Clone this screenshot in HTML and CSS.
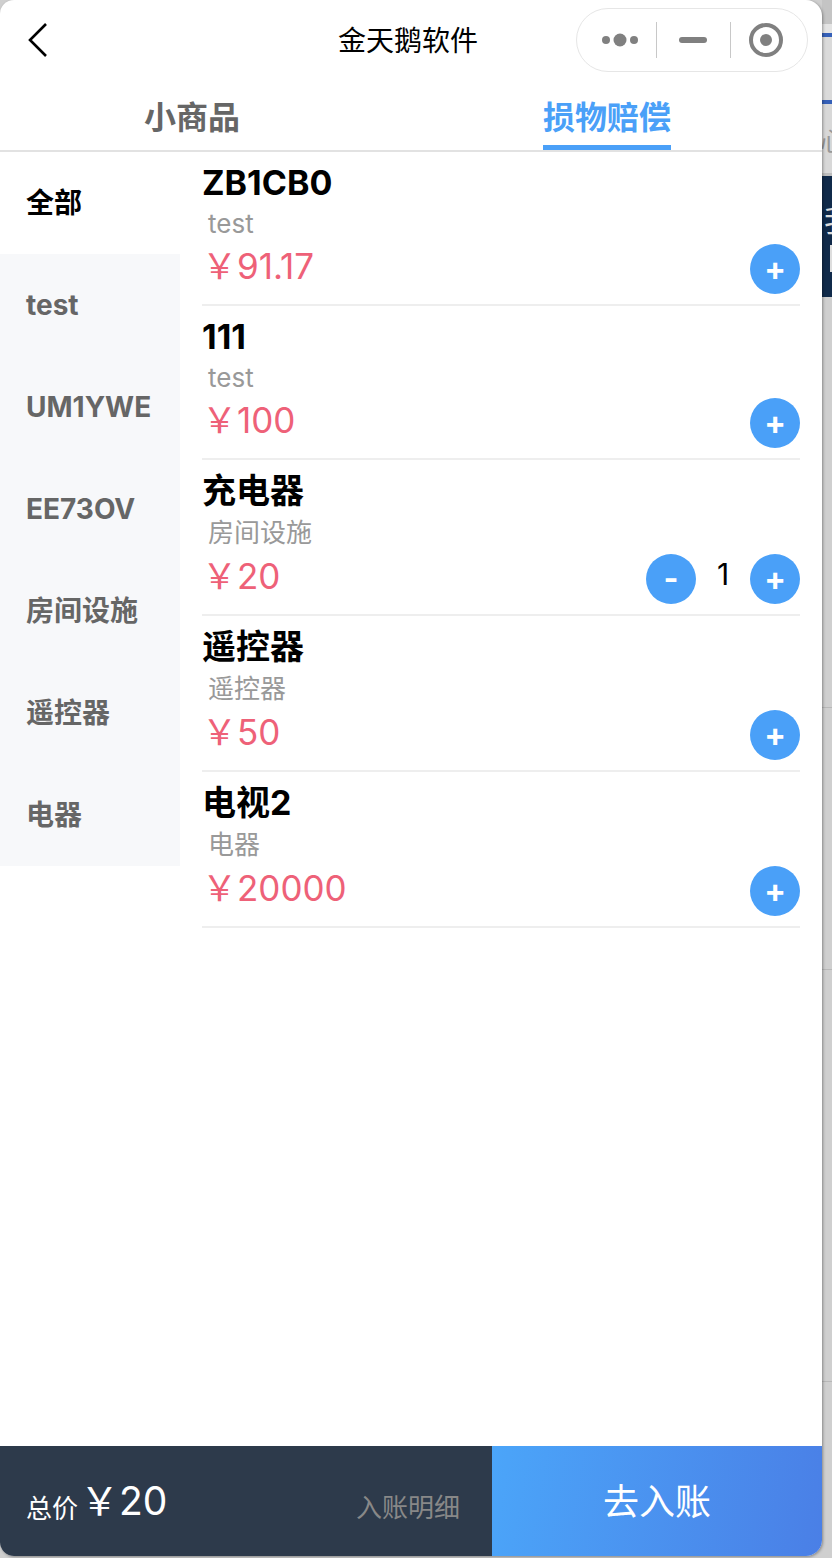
FILE: index.html
```html
<!DOCTYPE html>
<html lang="zh-CN">
<head>
    <meta charset="UTF-8">
    <meta name="viewport" content="width=device-width, initial-scale=1.0">
    <title>金天鹅软件</title>
    <link rel="stylesheet" href="styles.css">
</head>
<body>
    <div class="phone">
        <div class="nav-bar">
            <svg class="back-icon" width="22" height="36" viewBox="0 0 22 36"><path d="M19 2 3 18l16 16" fill="none" stroke="#000" stroke-width="2.6"/></svg>
            <div class="nav-title">金天鹅软件</div>
            <div class="capsule">
                <svg class="capsule-more" width="38" height="14" viewBox="0 0 38 14"><circle cx="5" cy="7" r="4" fill="#808080"/><circle cx="19" cy="7" r="6.5" fill="#808080"/><circle cx="33" cy="7" r="4" fill="#808080"/></svg>
                <span class="capsule-line"></span>
                <span class="capsule-min"></span>
                <span class="capsule-line"></span>
                <svg class="capsule-close" width="34" height="34" viewBox="0 0 34 34"><circle cx="17" cy="17" r="15" fill="none" stroke="#808080" stroke-width="4"/><circle cx="17" cy="17" r="6" fill="#808080"/></svg>
            </div>
        </div>

        <div class="tabs">
            <div class="tab">小商品</div>
            <div class="tab tab-active">损物赔偿</div>
        </div>

        <div class="content">
            <div class="side-menu">
                <div class="side-item side-item-active side-item-cjk">全部</div>
                <div class="side-item">test</div>
                <div class="side-item">UM1YWE</div>
                <div class="side-item">EE73OV</div>
                <div class="side-item side-item-cjk">房间设施</div>
                <div class="side-item side-item-cjk">遥控器</div>
                <div class="side-item side-item-cjk">电器</div>
            </div>

            <div class="goods-list">
                <div class="goods-item">
                    <div class="goods-name">ZB1CB0</div>
                    <div class="goods-desc">test</div>
                    <div class="goods-row">
                        <div class="goods-price">￥91.17</div>
                        <div class="stepper"><button class="step-btn">+</button></div>
                    </div>
                </div>
                <div class="goods-item">
                    <div class="goods-name">111</div>
                    <div class="goods-desc">test</div>
                    <div class="goods-row">
                        <div class="goods-price">￥100</div>
                        <div class="stepper"><button class="step-btn">+</button></div>
                    </div>
                </div>
                <div class="goods-item goods-item-cjk">
                    <div class="goods-name">充电器</div>
                    <div class="goods-desc">房间设施</div>
                    <div class="goods-row">
                        <div class="goods-price">￥20</div>
                        <div class="stepper">
                            <button class="step-btn">-</button>
                            <span class="step-num">1</span>
                            <button class="step-btn">+</button>
                        </div>
                    </div>
                </div>
                <div class="goods-item goods-item-cjk">
                    <div class="goods-name">遥控器</div>
                    <div class="goods-desc">遥控器</div>
                    <div class="goods-row">
                        <div class="goods-price">￥50</div>
                        <div class="stepper"><button class="step-btn">+</button></div>
                    </div>
                </div>
                <div class="goods-item goods-item-cjk">
                    <div class="goods-name">电视2</div>
                    <div class="goods-desc">电器</div>
                    <div class="goods-row">
                        <div class="goods-price">￥20000</div>
                        <div class="stepper"><button class="step-btn">+</button></div>
                    </div>
                </div>
            </div>
        </div>

        <div class="bottom-bar">
            <div class="total">
                <span class="total-label">总价</span>
                <span class="total-price">￥20</span>
                <span class="detail-link">入账明细</span>
            </div>
            <div class="submit-btn">去入账</div>
        </div>
    </div>

    <div class="behind">
        <div class="behind-head"></div>
        <div class="behind-tab"></div>
        <div class="behind-gap"></div>
        <div class="behind-tab"></div>
        <div class="behind-text">心</div>
        <div class="behind-banner">
            <div class="banner-char">我</div>
            <div class="banner-bar"></div>
        </div>
        <div class="behind-row behind-row-1"></div>
        <div class="behind-row behind-row-2"></div>
        <div class="behind-row behind-row-3"></div>
    </div>
</body>
</html>
```

FILE: styles.css
```css
* {
    box-sizing: border-box;
}

body {
    margin: 0;
    display: flex;
    height: 1558px;
    overflow: hidden;
    background-color: #cfcfcf;
    font-family: "Inter", "Noto Sans CJK SC", sans-serif;
}

.phone {
    width: 822px;
    height: 1556px;
    flex-shrink: 0;
    display: flex;
    flex-direction: column;
    background: #ffffff;
    border-radius: 14px 16px 16px 14px;
    overflow: hidden;
    box-shadow: 1px 1px 3px rgba(0, 0, 0, 0.35);
    position: relative;
}

.nav-bar {
    height: 80px;
    flex-shrink: 0;
    display: flex;
    align-items: center;
    padding: 0 14px 0 27px;
}

.back-icon {
    flex-shrink: 0;
}

.nav-title {
    width: 140px;
    margin-left: 289px;
    margin-top: -2px;
    font-size: 28px;
    color: #000000;
    white-space: nowrap;
}

.capsule {
    width: 233px;
    height: 64px;
    margin-left: 98px;
    border: 1px solid #e6e6e6;
    border-radius: 32px;
    display: flex;
    align-items: center;
    padding-left: 24px;
}

.capsule-line {
    width: 1px;
    height: 36px;
    background: #c8c8c8;
}

.capsule-more {
    margin-right: 17px;
}

.capsule-min {
    width: 28px;
    height: 6px;
    margin: 0 23px 0 22px;
    border-radius: 3px;
    background: #808080;
}

.capsule-close {
    margin-left: 18px;
}

.tabs {
    height: 72px;
    flex-shrink: 0;
    display: flex;
    gap: 303px;
    padding-left: 144px;
    border-bottom: 2px solid #e2e2e2;
}

.tab {
    height: 70px;
    padding-top: 16px;
    font-size: 32px;
    line-height: 44px;
    font-weight: 700;
    color: #666666;
}

.tab-active {
    height: 70px;
    color: #4aa0f8;
    border-bottom: 5px solid #4aa0f8;
}

.content {
    flex: 1;
    display: flex;
    min-height: 0;
}

.side-menu {
    width: 180px;
    flex-shrink: 0;
}

.side-item {
    height: 102px;
    padding-left: 26px;
    display: flex;
    align-items: center;
    background: #f7f8fa;
    font-size: 28px;
    font-weight: 700;
    color: #666666;
}

.side-item-cjk {
    padding-bottom: 4px;
}

.side-item-active {
    background: #ffffff;
    color: #000000;
}

.goods-list {
    flex: 1;
    margin: 0 22px;
}

.goods-item {
    height: 154px;
    border-bottom: 2px solid #eeeeee;
}

.goods-item-cjk {
    height: 156px;
}

.goods-name {
    height: 60px;
    padding-top: 8px;
    font-size: 34px;
    line-height: 46px;
    font-weight: 700;
    color: #000000;
}

.goods-desc {
    height: 32px;
    padding-left: 6px;
    font-size: 26px;
    line-height: 24px;
    color: #999999;
}

.goods-item-cjk .goods-desc {
    height: 34px;
    padding-top: 1px;
}

.goods-row {
    display: flex;
    justify-content: space-between;
    align-items: center;
    height: 50px;
}

.goods-price {
    margin-top: -11px;
    font-size: 35px;
    color: #ee6178;
}

.stepper {
    display: flex;
    align-items: center;
}

.step-btn {
    width: 50px;
    height: 50px;
    padding: 0;
    border: none;
    border-radius: 50%;
    background: #4aa0f8;
    color: #ffffff;
    font-family: inherit;
    font-size: 32px;
    font-weight: 700;
    line-height: 46px;
}

.step-num {
    width: 54px;
    margin-top: -10px;
    text-align: center;
    font-size: 30px;
    color: #000000;
}

.bottom-bar {
    height: 110px;
    flex-shrink: 0;
    display: flex;
}

.total {
    width: 492px;
    padding: 0 32px 0 26px;
    display: flex;
    align-items: center;
    background: #2d3a4b;
}

.total-label {
    font-size: 26px;
    color: #ffffff;
    margin-top: 10px;
}

.total-price {
    margin-left: 2px;
    margin-top: -6px;
    font-size: 39px;
    color: #ffffff;
}

.detail-link {
    margin-left: auto;
    margin-top: 8px;
    font-size: 26px;
    color: #888888;
}

.submit-btn {
    flex: 1;
    display: flex;
    align-items: center;
    justify-content: center;
    padding-bottom: 4px;
    background: linear-gradient(100deg, #4ba5f9, #4a7fe6);
    color: #ffffff;
    font-size: 36px;
}

.behind {
    flex: 1;
    min-width: 0;
    overflow: hidden;
}

.behind-head {
    height: 33px;
    background: linear-gradient(#c4c4c4 24px, #e4e4e4 24px);
}

.behind-tab {
    height: 4px;
    background: #3560b8;
}

.behind-gap {
    height: 63px;
    background: #dadada;
}

.behind-text {
    height: 72px;
    padding-top: 10px;
    margin-left: -2px;
    border-bottom: 3px solid #bdbdbd;
    background: #d8d8d8;
    font-size: 26px;
    line-height: 56px;
    color: #999999;
}

.behind-banner {
    height: 121px;
    padding-top: 24px;
    background: #102a4a;
}

.banner-char {
    margin-left: 2px;
    height: 45px;
    color: #dddddd;
    font-size: 30px;
    line-height: 40px;
}

.banner-bar {
    width: 2px;
    height: 27px;
    margin-left: 8px;
    background: #dddddd;
}

.behind-row {
    border-bottom: 1px solid #b8b8b8;
}

.behind-row-1 {
    height: 411px;
}

.behind-row-2 {
    height: 262px;
}

.behind-row-3 {
    height: 412px;
}
```
